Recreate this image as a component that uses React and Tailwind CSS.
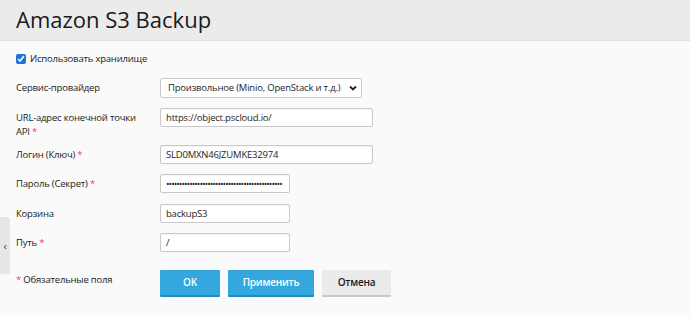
import React from "react";

const font = { fontFamily: '"Open Sans", "Noto Sans", sans-serif' };

function Star() {
  return <span className="text-[#e0455e]"> *</span>;
}

function Row({ label, req, top, children, tall }) {
  return (
    <div className={`flex items-start ${top}`}>
      <div className={`w-[144px] shrink-0 pt-[3px] leading-[14px] pr-[16px] ${tall ? "h-[31px]" : ""}`}>
        {label}
        {req && <Star />}
      </div>
      {children}
    </div>
  );
}

const inputCls =
  "h-[19px] border border-[#c8c8c8] rounded-[2px] bg-white px-[5px] text-[9.5px] tracking-[-0.2px] text-[#1e1e1e] outline-none shadow-[inset_0_1px_1px_rgba(0,0,0,0.04)]";

export default function App() {
  return (
    <div className="relative w-[690px] h-[316px] overflow-hidden bg-[#fafafa] text-[9.5px] tracking-[-0.2px] text-[#222]" style={font}>
      <div className="h-[41px] bg-[#ebebeb] border-b border-[#e1e1e1] px-4 flex items-center">
        <h1 className="text-[22px] tracking-normal leading-none text-[#1a1a1a] -mt-[3px]">Amazon S3 Backup</h1>
      </div>

      <div className="px-4">
        <label className="flex items-center mt-[12px] h-[12px]">
          <input type="checkbox" defaultChecked className="w-[10px] h-[10px] m-0 accent-[#1d72d9]" />
          <span className="ml-[4px] leading-[14px]">Использовать хранилище</span>
        </label>

        <Row label="Сервис-провайдер" top="mt-[13px]">
          <div className="relative w-[202px] h-[20px] border border-[#c8c8c8] rounded-[2px] bg-white flex items-center pl-[7px]">
            <span className="text-[9.5px] text-[#1e1e1e] leading-none">Произвольное (Minio, OpenStack и т.д.)</span>
            <svg className="absolute right-[4px] top-[6px]" width="8" height="6" viewBox="0 0 8 6">
              <path d="M1 1.5 L4 4.5 L7 1.5" stroke="#222" strokeWidth="1.8" fill="none" />
            </svg>
          </div>
        </Row>

        <Row label="URL-адрес конечной точки API" req top="mt-[10px]" tall>
          <input className={`${inputCls} w-[213px]`} defaultValue="https://object.pscloud.io/" />
        </Row>

        <Row label="Логин (Ключ)" req top="mt-[6px]">
          <input className={`${inputCls} w-[213px]`} defaultValue="SLD0MXN46JZUMKE32974" />
        </Row>

        <Row label="Пароль (Секрет)" req top="mt-[10px]">
          <input type="password" className={`${inputCls} w-[130px] text-[8px] tracking-[-1px]`} defaultValue="abcdefghijabcdefghijabcdefghijabcdefghijabcde" />
        </Row>

        <Row label="Корзина" top="mt-[11px]">
          <input className={`${inputCls} w-[130px]`} defaultValue="backupS3" />
        </Row>

        <Row label="Путь" req top="mt-[10px]">
          <input className={`${inputCls} w-[130px]`} defaultValue="/" />
        </Row>

        <div className="flex items-start mt-[18px]">
          <div className="w-[144px] shrink-0 pt-[3px] leading-[14px]">
            <span className="text-[#e0455e]">*</span> Обязательные поля
          </div>
          <div className="flex gap-[8px]">
            <button className="w-[60px] h-[27px] bg-[#34a7de] border-b-2 border-[#2488bb] text-white font-semibold text-[10px] rounded-[1px]">
              OK
            </button>
            <button className="w-[86px] h-[27px] bg-[#34a7de] border-b-2 border-[#2488bb] text-white font-semibold text-[10px] rounded-[1px]">
              Применить
            </button>
            <button className="w-[69px] h-[27px] bg-[#ebebeb] border-b-2 border-[#c9c9c9] text-[#1a1a1a] font-semibold text-[10px] rounded-[1px]">
              Отмена
            </button>
          </div>
        </div>
      </div>

      <div className="absolute left-0 top-[217px] w-[10px] h-[57px] bg-[#e6e6e6] rounded-r-[2px] flex items-center justify-center text-[#444] text-[11px] leading-none">
        ‹
      </div>
    </div>
  );
}
